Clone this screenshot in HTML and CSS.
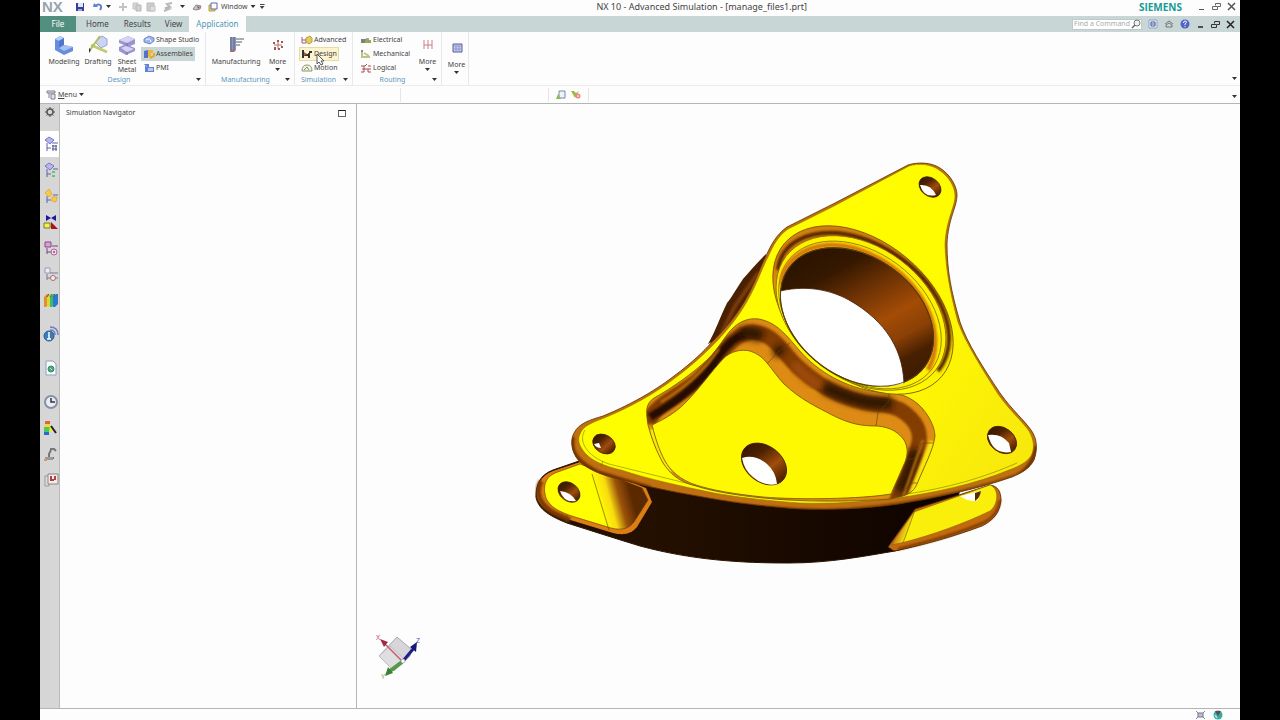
FILE: index.html
```html
<!DOCTYPE html>
<html lang="en">
<head>
  <meta charset="UTF-8">
  <meta name="viewport" content="width=device-width, initial-scale=1.0">
  <title>NX 10 - Advanced Simulation</title>
  <link rel="stylesheet" href="styles.css">
</head>
<body>

<div class="app">

  <!-- title bar -->
  <header class="titlebar">
    <div class="quick-access">
      <span class="logo">NX</span>
      <button class="qa-btn qa-save" aria-label="Save"><svg width="10" height="10" viewBox="0 0 10 10"><path d="M1 1h8v8H1z" fill="#34409a"/><path d="M3 1h5v4H3z" fill="#dfe6f8"/><path d="M3 7h4v2H3z" fill="#a0a8d4"/></svg></button>
      <button class="qa-btn" aria-label="Undo"><svg width="10" height="10" viewBox="0 0 10 10"><path d="M2 4C6 1 10 3 7 8" fill="none" stroke="#5c80d2" stroke-width="2"/><path d="M0 5l1-4 4 4z" fill="#5c80d2"/></svg></button>
      <i class="caret"></i>
      <button class="qa-btn" aria-label="Cut"><svg width="10" height="10" viewBox="0 0 10 10"><path d="M5 1v8M1 5h8" fill="none" stroke="#c3c3c3" stroke-width="2"/></svg></button>
      <button class="qa-btn" aria-label="Copy"><svg width="10" height="10" viewBox="0 0 10 10"><path d="M1 1h5v6H1z" fill="#d8d8d8" stroke="#c4c4c4"/><path d="M4 3h5v6H4z" fill="#d0d0d0" stroke="#b8b8b8"/></svg></button>
      <button class="qa-btn" aria-label="Paste"><svg width="10" height="10" viewBox="0 0 10 10"><path d="M1 1h7v8H1z" fill="#ccc" stroke="#bbb"/><path d="M4 4h5v5H4z" fill="#ddd" stroke="#c0c0c0"/></svg></button>
      <button class="qa-btn qa-wide" aria-label="Repeat"><svg width="10" height="10" viewBox="0 0 10 10"><path d="M9 1L4 2l3 3-5 1 4 1-5 2" fill="none" stroke="#b8b8b8" stroke-width="2"/></svg></button>
      <i class="caret"></i>
      <button class="qa-btn" aria-label="Touch"><svg width="10" height="10" viewBox="0 0 10 10"><path d="M1 7l3-4 5 1-1 3-4 1z" fill="#c5c5ce" stroke="#888"/><path d="M5 4l3 1-2 2z" fill="#a8504c"/></svg></button>
      <button class="window-btn"><svg width="10" height="10" viewBox="0 0 10 10"><path d="M1 3h6v6H1z" fill="#ecd26b" stroke="#b89b4d"/><path d="M3 1h6v6H3z" fill="#fff" stroke="#5c68a6"/></svg>Window<i class="caret"></i></button>
      <i class="caret-bar"></i>
    </div>
    <h1 class="title">NX 10 - Advanced Simulation - [manage_files1.prt]</h1>
    <div class="window-controls">
      <span class="brand">SIEMENS</span>
      <button aria-label="Minimize"><svg width="9" height="9" viewBox="0 0 9 9"><path d="M2 7.500h5" stroke="#555"/></svg></button>
      <button aria-label="Restore"><svg width="9" height="9" viewBox="0 0 9 9"><path d="M3.500 3.500V1.500h5v3H6M.500 4.500h5v3h-5z" fill="none" stroke="#666"/></svg></button>
      <button aria-label="Close"><svg width="9" height="9" viewBox="0 0 9 9"><path d="M1 1l7 7M8 1L1 8" stroke="#555" stroke-width="1.500"/></svg></button>
    </div>
  </header>

  <!-- ribbon tabs -->
  <nav class="tabs">
    <button class="tab tab-file">File</button>
    <button class="tab">Home</button>
    <button class="tab">Results</button>
    <button class="tab">View</button>
    <button class="tab tab-active">Application</button>
    <div class="tab-tools">
      <div class="search">
        <input type="text" placeholder="Find a Command" aria-label="Find a Command">
        <svg width="10" height="10" viewBox="0 0 10 10"><circle cx="6" cy="4" r="3" fill="#eef4f4" stroke="#777"/><path d="M4 6L1 9" stroke="#666" stroke-width="1.500"/></svg>
      </div>
      <button aria-label="Full screen"><svg width="10" height="10" viewBox="0 0 10 10"><path d="M1 1h8v8H1z" fill="#e6ecfa" stroke="#90a5cb"/><path d="M3 3h4v4H3zM3 5h4" fill="#fff" stroke="#445b92"/></svg></button>
      <button aria-label="Collapse ribbon"><svg width="10" height="10" viewBox="0 0 10 10"><path d="M1 5l4-3 4 3M2 8V6l3-2 3 2v2z" fill="none" stroke="#777"/></svg></button>
      <button aria-label="Help"><svg width="10" height="10" viewBox="0 0 10 10"><circle cx="5" cy="5" r="4.500" fill="#5064c8"/><path d="M3.500 4q0-2 1.500-2t1.500 1.300L5 5v1M5 7v1" fill="none" stroke="#fff"/></svg></button>
      <button aria-label="Minimize part"><svg width="9" height="9" viewBox="0 0 9 9"><path d="M2 7h5" stroke="#222" stroke-width="1.500"/></svg></button>
      <button aria-label="Restore part"><svg width="9" height="9" viewBox="0 0 9 9"><path d="M3.500 3.500V1.500h5v3H6M.500 4.500h5v3h-5z" fill="none" stroke="#333"/></svg></button>
      <button aria-label="Close part"><svg width="9" height="9" viewBox="0 0 9 9"><path d="M1 1l7 7M8 1L1 8" stroke="#222" stroke-width="1.500"/></svg></button>
    </div>
  </nav>

  <!-- ribbon -->
  <section class="ribbon">
    <div class="group group-design">
      <div class="group-body">
        <button class="big"><svg width="20" height="20" viewBox="0 0 20 20"><path d="M1 4l5-3 4 2v7l9 2v4l-9 4-9-5z" fill="#668dde"/><path d="M1 4l5-3 4 2-5 3z" fill="#b8cdf8"/><path d="M5 6l5-3v7l-5 3z" fill="#5077cb"/><path d="M5 13l5-3 9 2-9 4z" fill="#a7c0f3"/></svg>Modeling</button>
        <button class="big"><svg width="20" height="20" viewBox="0 0 20 20"><path d="M7 7l7-6 5 3v6l-6 3z" fill="#cbd4f2" stroke="#9aa6d2"/><path d="M3 10l16 7" stroke="#c3cb72" stroke-width="3"/><path d="M12 1L2 15" stroke="#b5bc61" stroke-width="2"/><path d="M1 13l2 2-2 3z" fill="#333"/></svg>Drafting</button>
        <button class="big big-narrow"><svg width="20" height="20" viewBox="0 0 20 20"><path d="M2 5l9-4 7 3v5l-5 2 5 2v3l-9 4-7-4v-4l5-2-5-2z" fill="#9a94ce"/><path d="M2 5l9-4 7 3-8 4zM4 13l5-2 8 3-7 3z" fill="#d5d3f0"/><path d="M10 8v3M10 17v3" stroke="#6f6aa6"/></svg>Sheet<br>Metal</button>
        <div class="stack">
          <button class="small"><svg width="12" height="10" viewBox="0 0 12 10"><path d="M1 4l5-3 5 2v3L7 9 1 7z" fill="#9db4e9" stroke="#6f8bd0"/><path d="M3 5q4-3 5 2" fill="none" stroke="#fff"/></svg>Shape Studio</button>
          <button class="small small-on"><svg width="12" height="10" viewBox="0 0 12 10"><path d="M1 2l4-1v8H1z" fill="#5373c9"/><path d="M5 1h5v3H8v4H5z" fill="#f2b82c"/><path d="M7 9l4-2V4" fill="none" stroke="#e5ab24" stroke-width="2"/></svg>Assemblies</button>
          <button class="small"><svg width="12" height="10" viewBox="0 0 12 10"><path d="M2 1h4v3h5v5H2z" fill="#6483d2"/><path d="M5 5h5v3H5z" fill="#b9caf1"/><path d="M1 1l3 3" stroke="#9db4e9"/></svg>PMI</button>
        </div>
      </div>
      <div class="group-title">Design<i class="caret"></i></div>
    </div>

    <div class="group group-manufacturing">
      <div class="group-body">
        <button class="big big-wide"><svg width="20" height="20" viewBox="0 0 20 20"><path d="M4 2h6v13H4z" fill="#8d97b8"/><path d="M5 2v13M8 2v13" stroke="#5d668c"/><path d="M10 4h8M10 7h6M10 10h4" stroke="#8b919e" stroke-width="1.500"/><path d="M4 15h6l-2 2H4z" fill="#a56b70"/></svg>Manufacturing</button>
        <button class="big big-more"><svg width="20" height="20" viewBox="0 0 20 20"><path d="M10 6v8M6 10h8" stroke="#b87071"/><path d="M5 7h2v2H5zM9 5h2v2H9zM13 6h2v2h-2zM6 12h2v3H6zM10 13h2v2h-2zM13 11h2v2h-2z" fill="#a75657"/></svg>More<i class="caret"></i></button>
      </div>
      <div class="group-title">Manufacturing<i class="caret"></i></div>
    </div>

    <div class="group group-simulation">
      <div class="group-body">
        <div class="stack">
          <button class="small"><svg width="12" height="10" viewBox="0 0 12 10"><path d="M1 2v6h4V4M1 5h4" fill="none" stroke="#9b5d8e"/><path d="M5 3l4-2 2 2v4L8 9 5 7z" fill="#e5cd55" stroke="#b89f40"/></svg>Advanced</button>
          <button class="small small-hover"><svg width="12" height="10" viewBox="0 0 12 10"><path d="M2 1v8M2 6h6M8 3h3M8 4v5" fill="none" stroke="#333" stroke-width="2"/><path d="M3 3l3 2-3 2z" fill="#c54c42"/></svg>Design
            <svg class="cursor" width="9" height="13" viewBox="0 0 9 13"><path d="M1 1v10l2-2 2 3 2-1-2-3h3z" fill="#fff" stroke="#555"/></svg>
          </button>
          <button class="small"><svg width="12" height="10" viewBox="0 0 12 10"><path d="M1 8q0-6 5-6t5 6z" fill="#f4f4dd" stroke="#8c9278"/><path d="M3 7l3-3 2 3" fill="none" stroke="#6f9a52"/></svg>Motion</button>
        </div>
      </div>
      <div class="group-title">Simulation<i class="caret"></i></div>
    </div>

    <div class="group group-routing">
      <div class="group-body">
        <div class="stack stack-routing">
          <button class="small"><svg width="12" height="10" viewBox="0 0 12 10"><path d="M1 4h5v4H1z" fill="#75857a"/><path d="M5 5h6v3H5z" fill="#9aa654"/><path d="M6 4h3" stroke="#444"/></svg>Electrical</button>
          <button class="small"><svg width="12" height="10" viewBox="0 0 12 10"><path d="M2 1v7h8M4 4l5 3" fill="none" stroke="#c0c381" stroke-width="2"/><path d="M1 1h2v2H1z" fill="#889"/></svg>Mechanical</button>
          <button class="small"><svg width="12" height="10" viewBox="0 0 12 10"><path d="M1 3h4l2-2M2 6h9M4 3v6M8 3h3M1 9h3M8 6v3h3" fill="none" stroke="#a84a50"/></svg>Logical</button>
        </div>
        <button class="big big-more"><svg width="20" height="20" viewBox="0 0 20 20"><path d="M6 5v9M10 5v9M14 5v9M6 10h8" stroke="#cb7f8a" fill="none"/></svg>More<i class="caret"></i></button>
      </div>
      <div class="group-title">Routing<i class="caret"></i></div>
    </div>

    <div class="group group-more">
      <button class="big big-more"><svg width="20" height="20" viewBox="0 0 20 20"><path d="M6 6h9v8H6z" fill="#c7cceb" stroke="#555c98"/><path d="M6 8h9M6 11h9M9 8v6M12 8v6" stroke="#8f98cc"/></svg>More<i class="caret"></i></button>
    </div>
    <i class="caret caret-end"></i>
  </section>

  <!-- border bar -->
  <section class="menubar">
    <button class="menu-btn"><svg width="10" height="10" viewBox="0 0 10 10"><path d="M1 1h8v2H1zM3 3v5M5 4h4v5H5z" fill="#e4e4e8" stroke="#7c8094"/></svg><span><u>M</u>enu</span><i class="caret"></i></button>
    <div class="menubar-slot"></div>
    <div class="menubar-tools">
      <button aria-label="Show in navigator"><svg width="10" height="10" viewBox="0 0 10 10"><path d="M3 1h6v7H3z" fill="#eef2fb" stroke="#7d89a5"/><path d="M0 9l2-5 3 5z" fill="#8ebb55"/></svg></button>
      <button aria-label="Reset filters"><svg width="10" height="10" viewBox="0 0 10 10"><path d="M0 1h3l2 2 3-2-4 7z" fill="#a4b840"/><circle cx="7" cy="6" r="2.500" fill="#e58a83"/><path d="M6 6h2" stroke="#fff"/></svg></button>
    </div>
    <i class="caret caret-end"></i>
  </section>

  <main class="workspace">
    <!-- resource bar -->
    <nav class="resource-bar">
      <button class="res-gear" aria-label="Settings"><svg width="10" height="10" viewBox="0 0 10 10"><circle cx="5" cy="5" r="3" fill="none" stroke="#555" stroke-width="1.500"/><path d="M5 0v2M5 8v2M0 5h2M8 5h2M1.500 1.500l1 1M7.500 7.500l1 1M8.500 1.500l-1 1M1.500 8.500l1-1" stroke="#555"/></svg></button>
      <button class="res res-on" aria-label="Simulation Navigator"><svg width="16" height="16" viewBox="0 0 16 16"><path d="M2 4l4-3 5 3-4 4z" fill="#b8b5f0" stroke="#7a75c4"/><path d="M4 7v8M4 12h4M9 7h6" stroke="#5b62a8"/><path d="M9 10h5M9 13h5M10 9v6M13 9v6" stroke="#4c5490"/></svg></button>
      <button class="res" aria-label="Assembly Navigator"><svg width="16" height="16" viewBox="0 0 16 16"><path d="M2 4l4-3 5 3-4 4z" fill="#b8b5f0" stroke="#7a75c4"/><path d="M4 7v8M4 12h4M10 7h5" stroke="#5b62a8"/><path d="M9 9h3v2H9zM9 13h3v2H9z" fill="#65c869"/></svg></button>
      <button class="res" aria-label="Part Navigator"><svg width="16" height="16" viewBox="0 0 16 16"><path d="M2 5l4-4 3 5-3 3zM9 9h5l-1 5-4-1z" fill="#f6ce3d" stroke="#e0ad49"/><path d="M4 8v7M4 12h4M10 7h5" stroke="#5b62a8"/></svg></button>
      <button class="res" aria-label="Constraint Navigator"><svg width="16" height="16" viewBox="0 0 16 16"><path d="M3 1l5 3-5 3zM13 1L8 4l5 3z" fill="#19199d"/><path d="M1 9h6v5H1z" fill="#f3f24a" stroke="#777a2c"/><path d="M8 8l7 7H8z" fill="#a9131b"/></svg></button>
      <button class="res" aria-label="Reuse Library"><svg width="16" height="16" viewBox="0 0 16 16"><path d="M2 2h6v5H2z" fill="#d6a2d4" stroke="#8f448e"/><path d="M4 8v6M4 12h4M9 6h6" stroke="#684e7c"/><circle cx="11" cy="12" r="3" fill="#f2d8eb" stroke="#b7609c"/><circle cx="11" cy="12" r="1" fill="#a7408c"/></svg></button>
      <button class="res" aria-label="View Manager"><svg width="16" height="16" viewBox="0 0 16 16"><path d="M2 2h5v5H2z" fill="#ececf4" stroke="#9b9bb5"/><path d="M4 8v6M4 12h4M7 7h8M13 12h2" stroke="#777b91"/><circle cx="10" cy="12" r="2.500" fill="#eee" stroke="#b26870"/></svg></button>
      <button class="res" aria-label="Post Processing"><svg width="16" height="16" viewBox="0 0 16 16"><path d="M1 5l3-3h2v10l-3 3H1z" fill="#e18f2e"/><path d="M4 5l3-3h2v10l-3 3H4z" fill="#d8d83a"/><path d="M7 5l3-3h2v10l-3 3H7z" fill="#38bc69"/><path d="M10 5l3-3h2v10l-3 3h-2z" fill="#2e76ce"/><path d="M4 5l2-3M7 5l2-3M10 5l2-3" stroke="#505c69"/></svg></button>
      <button class="res res-spaced" aria-label="Web Browser"><svg width="16" height="16" viewBox="0 0 16 16"><circle cx="6" cy="10" r="5" fill="#3e7cb6" stroke="#2b5c91"/><path d="M6 6v2M5 9h1v4M4 13h4" fill="none" stroke="#fff" stroke-width="1.500"/><path d="M7 4q5 0 5 5M7 1q8 0 8 8" fill="none" stroke="#6b7fc0" stroke-width="1.500"/></svg></button>
      <button class="res res-spaced" aria-label="Internet"><svg width="16" height="16" viewBox="0 0 16 16"><path d="M3 1h7l3 3v11H3z" fill="#f8fbff" stroke="#8fa2b5"/><circle cx="8" cy="9" r="3" fill="#4ba97a" stroke="#3e8a64"/><path d="M7 8l2 2" stroke="#b6dfea"/></svg></button>
      <button class="res res-spaced" aria-label="History"><svg width="16" height="16" viewBox="0 0 16 16"><circle cx="8" cy="8" r="6" fill="#e8edf7" stroke="#8890a2" stroke-width="2"/><path d="M8 4v4h4" fill="none" stroke="#333" stroke-width="1.500"/></svg></button>
      <button class="res" aria-label="Visualization"><svg width="16" height="16" viewBox="0 0 16 16"><path d="M2 1h5v3H2z" fill="#e0653b"/><path d="M2 4h5v3H2z" fill="#ecdb38"/><path d="M1 7h6v5H1z" fill="#50c660"/><path d="M1 12h5v3H1z" fill="#2a68cd"/><path d="M7 5l3 2-1 5H6z" fill="#ece94e"/><path d="M8 6l5 7" stroke="#222" stroke-width="2"/></svg></button>
      <button class="res" aria-label="Process Studio"><svg width="16" height="16" viewBox="0 0 16 16"><path d="M7 3h4l2 2M8 4L6 8v4h5" fill="none" stroke="#777" stroke-width="2"/><path d="M2 11h8v3H2z" fill="#999"/><path d="M1 13h3v2H1z" fill="#d49b64"/></svg></button>
      <button class="res" aria-label="Manufacturing Wizards"><svg width="16" height="16" viewBox="0 0 16 16"><path d="M2 4h4v10H2z" fill="#ddd" stroke="#999"/><path d="M5 2h10v10H5z" fill="#f5e8e6" stroke="#888"/><path d="M7 4h2v5H7zM11 4h2v4h-2zM9 7h2v2H9z" fill="#a94542"/></svg></button>
    </nav>

    <aside class="navigator">
      <h2>Simulation Navigator</h2>
      <button class="pin" aria-label="Maximize panel"></button>
    </aside>

    <!-- graphics window -->
    <section class="viewport">
      <svg class="scene" viewBox="357 104 883 604" role="img" aria-label="Bracket model">
        <defs>
          <linearGradient id="bore" x1="785" y1="270" x2="940" y2="345" gradientUnits="userSpaceOnUse">
            <stop offset="0" stop-color="#2a1300"/><stop offset=".2" stop-color="#351800"/><stop offset=".38" stop-color="#6d3204"/><stop offset=".58" stop-color="#a34c05"/><stop offset=".72" stop-color="#8a4006"/><stop offset=".84" stop-color="#482000"/><stop offset="1" stop-color="#3c1b00"/>
          </linearGradient>
          <linearGradient id="smallBore" x1="0" x2="1" y1="0" y2=".2">
            <stop offset="0" stop-color="#321500"/><stop offset=".35" stop-color="#4d2200"/><stop offset=".7" stop-color="#a04d0b"/><stop offset="1" stop-color="#572600"/>
          </linearGradient>
          <linearGradient id="face" x1="650" y1="250" x2="1000" y2="480" gradientUnits="userSpaceOnUse">
            <stop offset="0" stop-color="#ffff00"/><stop offset=".6" stop-color="#fffb00"/><stop offset="1" stop-color="#f8e90c"/>
          </linearGradient>
          <linearGradient id="body" x1="650" y1="0" x2="905" y2="0" gradientUnits="userSpaceOnUse">
            <stop offset="0" stop-color="#241000"/><stop offset=".5" stop-color="#1a0a00"/><stop offset="1" stop-color="#110500"/>
          </linearGradient>
          <linearGradient id="lugBend" x1="598" y1="503" x2="631" y2="494" gradientUnits="userSpaceOnUse">
            <stop offset="0" stop-color="#ffff00"/><stop offset=".35" stop-color="#f9dc10"/><stop offset=".65" stop-color="#9b520a"/><stop offset="1" stop-color="#5b2900"/>
          </linearGradient>
          <linearGradient id="lugRight" x1="893" y1="524" x2="909" y2="530" gradientUnits="userSpaceOnUse">
            <stop offset="0" stop-color="#612b00"/><stop offset=".5" stop-color="#d4901a"/><stop offset="1" stop-color="#faef0b"/>
          </linearGradient>
          <linearGradient id="groove" x1="790" y1="235" x2="900" y2="385" gradientUnits="userSpaceOnUse">
            <stop offset="0" stop-color="#d07c10"/><stop offset=".4" stop-color="#d98410"/><stop offset=".75" stop-color="#f5e000"/><stop offset="1" stop-color="#ffff00"/>
          </linearGradient>
          <filter id="soft" x="-10%" y="-10%" width="120%" height="120%"><feGaussianBlur stdDeviation="3"/></filter>
          <filter id="softer" x="-10%" y="-10%" width="120%" height="120%"><feGaussianBlur stdDeviation="1"/></filter>
          <clipPath id="holeClip"><ellipse cx="858" cy="317" rx="85" ry="60" transform="rotate(36 858 317)"/></clipPath>
          <clipPath id="plateClip"><path id="plate" d="M908 165C917 162 931 162 940 168C951 175 957 187 957 195C957 207 948 219 947 244C947 270 951 291 960 322C967 343 984 369 1000 393C1012 410 1024 420 1031 430C1037 438 1038 449 1034 460C1030 468 1022 473 1012 477C978 489 935 498 899 504C865 509 830 510 800 509C769 507 736 503 714 499C679 493 647 487 619 479C600 475 586 468 579 461C571 452 570 440 574 433C579 423 590 420 603 416C635 403 660 387 674 376C693 362 704 351 711 343C725 329 738 314 748 295C756 280 761 265 766 256C771 245 776 235 787 227C801 220 819 211 833 204z"/></clipPath>
          <clipPath id="pocketClip"><path id="pocket" d="M648 425C646 412 645 404 654 398C672 388 693 373 707 360C720 347 726 334 733 328C742 319 754 317 763 320C778 324 788 337 799 350C818 372 846 388 878 392C895 393 904 394 914 401C925 408 935 425 935 436C934 448 924 467 917 484C913 493 907 496 890 499C850 502 800 502 763 498C734 495 711 491 696 486C678 482 669 472 663 463C656 450 652 440 648 425z"/></clipPath>
        </defs>

        <!-- rear flange and body -->
        <path d="M582 460L553 470C540 475 536 484 536 497C538 508 547 515 567 523C592 531 614 538 640 546C692 560 740 563 789 563C830 563 865 556 895 551C920 545 935 540 945 535L960 490z" fill="url(#body)" stroke="#2b1300"/>
        <path d="M580 462L553 471C540 476 537 485 537 496C539 506 547 512 567 519L613 533C625 536 632 533 637 527L652 502L646 488z" fill="#dc7d15"/>
        <path d="M541 481C535 494 540 505 554 513L570 520" fill="none" stroke="#783804" stroke-width="5" filter="url(#softer)"/>
        <path d="M580 464L555 473C544 478 543 488 546 498C550 507 559 512 575 517L611 528C623 531 629 528 634 522L648 500L642 488z" fill="url(#lugBend)" stroke="#5e3906" stroke-width=".6"/>
        <path d="M592 474L609 530M566 522l1-7" stroke="#525200" stroke-width=".6"/>
        <path d="M915 509L990 485C998 486 1001 492 1001 500C1000 512 994 520 982 526C955 536 925 545 894 551L888 547z" fill="#c46a0e" stroke="#4b2500" stroke-width=".8"/>
        <path d="M1000 500Q998 515 985 522Q950 537 898 549" fill="none" stroke="#6b3303" stroke-width="2" filter="url(#softer)"/>
        <path d="M914 512L990 485C1000 489 998 505 990 511C965 523 933 535 901 543L891 545z" fill="url(#lugRight)" stroke="#876610" stroke-width=".6"/>
        <path d="M915 510l-12 33" stroke="#6b5a00" stroke-width=".6"/>
        <path d="M960 496Q970 503 978 500L981 491z" fill="#fff"/><path d="M975 493v8q5-3 6-10z" fill="#5b2900"/>
        <ellipse cx="569" cy="492" rx="12" ry="9" transform="rotate(38 569 492)" fill="url(#smallBore)" stroke="#392006" stroke-width=".8"/>
        <path d="M560 491Q571 492 576 501Q564 503 560 491z" fill="#fff"/>

        <!-- wall behind the upper left edge -->
        <path d="M766 254C757 263 750 271 743 279C736 289 732 297 727 303C721 315 716 330 708 344L735 330L765 270z" fill="#4a2100"/>
        <path d="M759 272L735 306L722 333" fill="none" stroke="#7a3c08" stroke-width="4" filter="url(#softer)"/>

        <!-- front plate with rolled edge -->
        <use href="#plate" fill="#c07010" stroke="#5b3000" stroke-width=".8"/>
        <g clip-path="url(#plateClip)">
          <path d="M573 437C569 453 580 464 600 473L650 488M1036 446Q1034 466 1017 476" fill="none" stroke="#6f3302" stroke-width="4" filter="url(#softer)"/>
          <path d="M600 475C680 499 755 509 825 510C900 508 970 491 1017 475" fill="none" stroke="#6f3502" stroke-width="2" filter="url(#softer)"/>
        </g>
        <path d="M909 166C918 163 931 164 939 170C950 177 955 188 955 196C955 207 946 220 945 245C946 271 950 292 958 322C966 344 983 370 998 394C1010 411 1022 421 1029 431C1034 440 1035 448 1031 456C1027 462 1020 466 1009 470C976 484 933 493 897 498C865 502 832 504 800 503C769 501 736 497 714 493C680 486 648 479 621 470C603 466 592 460 587 455C579 447 577 440 580 434C583 426 591 423 604 418C636 405 661 389 675 378C694 364 705 353 713 345C727 331 740 315 750 296C758 281 763 266 768 257C773 246 778 236 788 229C802 222 820 213 834 206z" fill="url(#face)" stroke="#8b7000" stroke-width=".6"/>
        <path d="M585 430C578 441 586 456 609 464L714 490C777 500 839 502 900 495C950 488 985 477 1017 463M601 466l2-5" fill="none" stroke="#676700" stroke-width=".5"/>

        <!-- pocket -->
        <g clip-path="url(#pocketClip)">
          <use href="#pocket" fill="#dd8b14"/>
          <path d="M649 424C652 406 674 399 697 381C719 362 728 334 753 332C776 334 783 354 799 368C826 392 855 404 885 405C905 408 922 424 919 442C916 459 905 480 896 503" fill="none" stroke="#833c05" stroke-width="15" filter="url(#softer)"/>
          <path d="M650 417C677 402 699 383 713 365C722 350 732 337 746 334" fill="none" stroke="#281000" stroke-width="8" filter="url(#softer)"/>
          <path d="M740 334Q752 331 762 337M776 348l6 6M824 387C849 399 871 405 892 403M916 450Q909 475 900 492" fill="none" stroke="#2e1300" stroke-width="12" filter="url(#soft)"/>
          <path d="M793 363Q806 378 820 386" fill="none" stroke="#a04b0b" stroke-width="9" filter="url(#soft)"/>
          <path d="M923 440L903 497M661 402Q698 380 719 349" fill="none" stroke="#ca7d13" stroke-width="2" filter="url(#softer)"/>
          <path d="M934 442L912 498M650 430L668 474" fill="none" stroke="#f9e408" stroke-width="9" filter="url(#softer)"/>
        </g>
        <use href="#pocket" fill="none" stroke="#6c5005" stroke-width=".8"/>
        <path d="M652 425C667 418 679 410 687 401C699 389 711 372 723 359C731 351 741 349 750 351C766 356 770 369 784 384C801 400 817 407 832 415C850 424 861 426 877 426C891 427 899 433 904 440C908 447 908 454 905 462L891 494C861 499 800 500 763 497C734 494 711 490 696 485C680 480 670 470 665 461C659 450 656 440 652 425z" fill="#fff900" stroke="#75530a" stroke-width=".8"/>
        <path d="M767 364l11-12 12-9M876 426l2-13 11-12v-9M906 459h8l8-16h11M891 495l9-1 12-11h5" fill="none" stroke="#614009" stroke-width=".6"/>

        <!-- main bore -->
        <ellipse cx="863" cy="310" rx="103" ry="68" transform="rotate(40 863 310)" fill="url(#groove)" stroke="#745400" stroke-width=".8"/>
        <path d="M778 270C781 242 808 231 838 233C877 237 917 264 936 296C952 322 954 351 938 371" fill="none" stroke="#542500" stroke-width="4" filter="url(#softer)"/>
        <ellipse cx="861" cy="313" rx="94" ry="66" transform="rotate(37 861 313)" fill="#fff000" stroke="#8a6906" stroke-width=".8"/>
        <ellipse cx="860" cy="315" rx="90" ry="63" transform="rotate(37 860 315)" fill="none" stroke="#6e6905" stroke-width=".7"/>
        <path d="M782 286C781 264 801 247 828 245C863 243 903 268 922 299C937 323 939 350 928 370" fill="none" stroke="#d67a0e" stroke-width="5" filter="url(#softer)"/>
        <ellipse cx="857" cy="317" rx="84" ry="60" transform="rotate(36 857 317)" fill="url(#bore)" stroke="#593300"/>
        <path d="M770 294C799 284 827 288 849 300C886 321 905 351 904 390L840 405L770 350z" fill="#fff" stroke="#411c00" stroke-width=".8" clip-path="url(#holeClip)"/>
        <ellipse cx="857" cy="317" rx="84" ry="60" transform="rotate(36 857 317)" fill="none" stroke="#574005" stroke-width=".8"/>

        <!-- mounting holes -->
        <g fill="url(#smallBore)" stroke="#432004" stroke-width=".8">
          <ellipse cx="930" cy="187" rx="12" ry="9" transform="rotate(38 930 187)"/>
          <ellipse cx="604" cy="444" rx="12" ry="9" transform="rotate(32 604 444)"/>
          <ellipse cx="764" cy="464" rx="25" ry="18" transform="rotate(38 764 464)"/>
          <ellipse cx="1002" cy="440" rx="16" ry="12" transform="rotate(38 1002 440)"/>
        </g>
        <path d="M920 185Q931 184 936 195Q924 198 920 185zM594 444l5-1 2 5q-5 0-7-4zM742 458Q755 454 767 464Q776 472 777 484Q764 487 753 477Q744 470 742 458zM988 435Q1001 433 1009 443L1011 452Q993 455 988 435z" fill="#fff"/>

        <!-- view triad -->
        <g>
          <path d="M379 656l18-19 14 12-1 7-16 15z" fill="#d6d6da" stroke="#aaa"/>
          <path d="M379 656l11-10 15 14-11 11z" fill="#dfdfe2" stroke="#b5b5b9" stroke-width=".7"/>
          <path d="M402 661L384 643" stroke="#c25a6e" stroke-width="1.500"/><path d="M380 639l8 3-4 5z" fill="#a42843"/>
          <path d="M403 661l11-13" stroke="#202086" stroke-width="3"/><path d="M417 642l-1 10-6-5z" fill="#181878"/>
          <path d="M402 662l-12 9" stroke="#55974b" stroke-width="4"/><path d="M385 676l3-9 5 6z" fill="#39822f"/>
          <circle cx="403" cy="661" r="2" fill="#fff" stroke="#9a9ab1" stroke-width=".6"/>
          <text class="axis" x="376" y="640" fill="#be4f65">X</text>
          <text class="axis" x="416" y="643" fill="#5961ad">Z</text>
          <text class="axis" x="381" y="679" fill="#7caa70">Y</text>
        </g>
      </svg>
    </section>
  </main>

  <footer class="statusbar">
    <svg width="11" height="10" viewBox="0 0 11 10"><path d="M1 1l2 2M10 1L8 3M1 9l2-2M10 9L8 7" stroke="#888"/><path d="M3 3h5v4H3z" fill="#bac0d5" stroke="#70778f"/></svg>
    <svg width="10" height="10" viewBox="0 0 10 10"><circle cx="5" cy="5" r="4.500" fill="#38aaa0"/><path d="M2 1h6L5 6z" fill="#604a58"/><path d="M2 5l2 3" stroke="#a0e5dd" stroke-width="1.500"/></svg>
  </footer>
</div>

</body>
</html>
```
FILE: styles.css
```css
* {
  box-sizing: border-box;
}

body {
  margin: 0;
  background-color: #000;
  font-family: 'Noto Sans', 'Open Sans', sans-serif;
  font-size: 7px;
  line-height: 8px;
  color: #444;
}

.app {
  display: flex;
  flex-direction: column;
  height: 100vh;
  margin: 0 40px;
  background-color: #fdfdfd;
}

button {
  display: flex;
  align-items: center;
  justify-content: center;
  margin: 0;
  padding: 0;
  border: none;
  background: none;
  color: inherit;
  font: inherit;
  white-space: nowrap;
}

svg {
  flex: none;
  display: block;
}

.caret {
  flex: none;
  display: block;
  width: 5px;
  height: 3px;
  background-color: #333;
  clip-path: polygon(0 0, 100% 0, 50% 100%);
}

/* title bar */
.titlebar {
  display: flex;
  align-items: center;
  flex: none;
  height: 16px;
  padding-bottom: 3px;
}

.quick-access {
  display: flex;
  align-items: center;
  gap: 3px;
}

.logo {
  width: 31px;
  padding-left: 2px;
  font: bold 15px 'Liberation Sans', sans-serif;
  line-height: 13px;
  color: #97a4b0;
}

.qa-btn {
  width: 11px;
}

.qa-save {
  margin-right: 4px;
}

.qa-btn + .caret {
  margin-right: 3px;
}

.qa-wide {
  width: 18px;
}

.window-btn {
  gap: 3px;
  margin-left: 3px;
}

.caret-bar {
  width: 5px;
  height: 5px;
  margin-left: 1px;
  background-color: #444;
  clip-path: polygon(0 0, 100% 0, 100% 20%, 0 20%, 0 40%, 100% 40%, 50% 100%, 0 40%);
}

.title {
  flex: 1;
  margin: 0;
  text-align: center;
  font-size: 9px;
  font-weight: normal;
  line-height: 12px;
}

.window-controls {
  display: flex;
  align-items: center;
  gap: 6px;
  padding-right: 4px;
}

.brand {
  margin-right: 9px;
  font: bold 10px 'Open Sans', sans-serif;
  line-height: 12px;
  color: #159c94;
}

/* ribbon tabs */
.tabs {
  display: flex;
  flex: none;
  height: 16px;
  background-color: #c8d6d6;
}

.tab {
  padding: 0 8px;
  font-size: 8px;
}

.tab-file {
  width: 36px;
  margin-right: 2px;
  background-color: #528f7e;
  color: #fff;
}

.tab:nth-child(3),
.tab:nth-child(4) {
  padding: 0 7px;
}

.tab-active {
  padding: 0 7px;
  background-color: #fdfdfd;
  color: #4f93ba;
}

.tab-tools {
  display: flex;
  align-items: center;
  gap: 6px;
  margin-left: auto;
  padding-right: 5px;
}

.search {
  display: flex;
  align-items: center;
  width: 70px;
  height: 11px;
  background-color: #fff;
  border: 1px solid #c0caca;
}

.search input {
  width: 58px;
  padding: 0 0 0 1px;
  border: none;
  background: none;
  font: inherit;
  outline: none;
}

.search input::placeholder {
  color: #aaa;
}

/* ribbon */
.ribbon {
  display: flex;
  flex: none;
  height: 54px;
  border-bottom: 1px solid #ececec;
}

.group {
  display: flex;
  flex-direction: column;
  border-right: 1px solid #e6e8ea;
}

.group-body {
  display: flex;
  flex: 1;
  min-height: 0;
}

.group-design {
  width: 166px;
  padding-left: 7px;
}

.group-manufacturing {
  width: 89px;
  padding-left: 5px;
}

.group-simulation {
  width: 58px;
  padding-left: 4px;
}

.group-routing {
  width: 89px;
  padding-left: 5px;
}

.group-more {
  width: 27px;
  padding: 3px 0 0 1px;
}

.group-title {
  position: relative;
  height: 9px;
  padding-right: 14px;
  text-align: center;
  color: #5d97bd;
}

.group-title .caret {
  position: absolute;
  right: 4px;
  top: 2px;
}

.big {
  flex-direction: column;
  justify-content: flex-start;
  width: 34px;
  padding-top: 3px;
}

.big svg {
  margin-bottom: 3px;
}

.big-narrow {
  width: 24px;
}

.big-wide {
  width: 52px;
}

.big-more {
  width: 27px;
}

.big-wide + .big-more {
  width: 34px;
}

.big .caret {
  margin-top: 2px;
}

.stack {
  display: flex;
  flex-direction: column;
  align-items: flex-start;
  padding-top: 1px;
}

.stack-routing {
  width: 56px;
}

.small {
  gap: 1px;
  height: 14px;
  padding: 0 1px;
  border: 1px solid transparent;
}

.group-design .small {
  margin-left: 2px;
}

.small-on {
  background-color: #c8d6d6;
}

.small-hover {
  position: relative;
  background-color: #fcf3cf;
  border-color: #eadb9d;
}

.cursor {
  position: absolute;
  left: 16px;
  top: 5px;
}

.caret-end {
  align-self: flex-end;
  margin: 0 3px 5px auto;
}

/* border bar */
.menubar {
  display: flex;
  align-items: center;
  flex: none;
  height: 18px;
  border-bottom: 1px solid #b5b5b5;
}

.menu-btn {
  gap: 2px;
  padding-left: 6px;
}

.menubar-slot {
  width: 149px;
  height: 14px;
  margin-left: 316px;
  border-left: 1px solid #e6e6e6;
  border-right: 1px solid #e6e6e6;
}

.menubar-tools {
  display: flex;
  gap: 5px;
  padding: 2px 7px;
  border-right: 1px solid #e6e6e6;
}

/* workspace */
.workspace {
  display: flex;
  flex: 1;
  min-height: 0;
}

.resource-bar {
  display: flex;
  flex-direction: column;
  width: 20px;
  background-color: #d6d6d6;
  border-right: 1px solid #bbb;
}

.res-gear {
  height: 16px;
  margin-bottom: 11px;
}

.res {
  height: 26px;
  padding-left: 2px;
}

.res-on {
  background-color: #fff;
}

.res-spaced {
  margin-top: 8px;
}

.navigator {
  display: flex;
  justify-content: space-between;
  align-items: flex-start;
  width: 297px;
  padding: 5px 10px 0 6px;
  border-right: 1px solid #b5b5b5;
}

.navigator h2 {
  margin: 0;
  font-size: 7px;
  font-weight: normal;
}

.pin {
  width: 8px;
  height: 7px;
  margin-top: 1px;
  border: 1px solid #666;
  border-top-color: #222;
}

.viewport {
  flex: 1;
  min-width: 0;
}

.scene {
  width: 100%;
  height: 100%;
}

.axis {
  font-size: 7px;
}

.statusbar {
  display: flex;
  align-items: center;
  justify-content: flex-end;
  gap: 7px;
  flex: none;
  height: 12px;
  padding-right: 17px;
  border-top: 1px solid #b5b5b5;
}
```
